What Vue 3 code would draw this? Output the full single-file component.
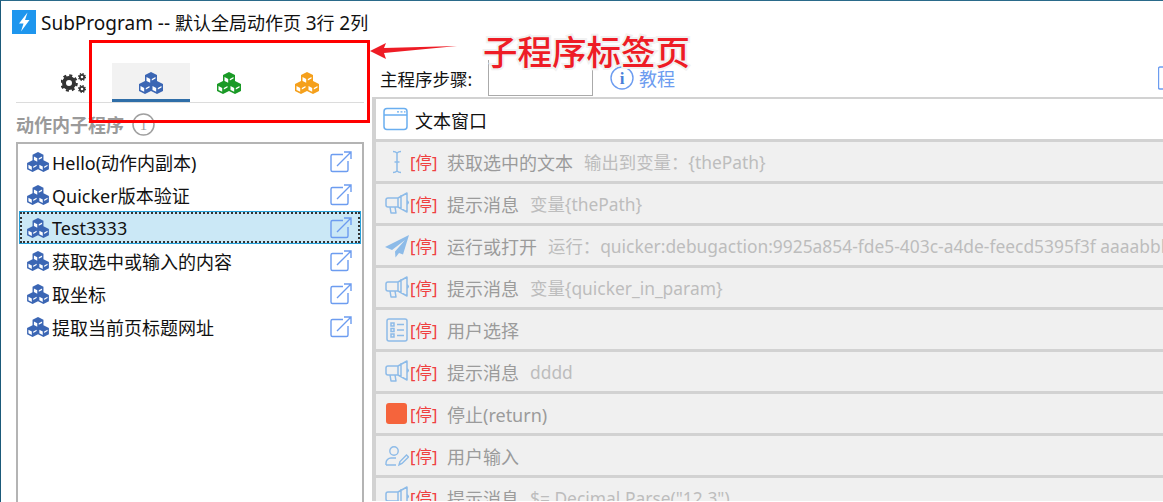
<script setup>
const cubes = [
  { x: 6, y: 0 },
  { x: 0, y: 9 },
  { x: 12, y: 9 }
]
const subs = [
  { name: 'Hello(动作内副本)' },
  { name: 'Quicker版本验证' },
  { name: 'Test3333', selected: true },
  { name: '获取选中或输入的内容' },
  { name: '取坐标' },
  { name: '提取当前页标题网址' }
]
const tabs = [
  { color: '#3b66b4', active: true },
  { color: '#1a9a26' },
  { color: '#f5a01c' }
]
const steps = [
  { icon: 'cursor', name: '获取选中的文本', detail: '输出到变量：{thePath}' },
  { icon: 'horn', name: '提示消息', detail: '变量{thePath}' },
  { icon: 'plane', name: '运行或打开', detail: '运行：quicker:debugaction:9925a854-fde5-403c-a4de-feecd5395f3f aaaabbb' },
  { icon: 'horn', name: '提示消息', detail: '变量{quicker_in_param}' },
  { icon: 'list', name: '用户选择', detail: '' },
  { icon: 'horn', name: '提示消息', detail: 'dddd' },
  { icon: 'stop', name: '停止(return)', detail: '' },
  { icon: 'user', name: '用户输入', detail: '' },
  { icon: 'horn', name: '提示消息', detail: '$= Decimal.Parse("12.3")' }
]
</script>

<template>
  <div class="win">
    <header class="title">
      <svg class="logo" viewBox="0 0 24 24"><rect width="24" height="24" fill="#1e96ee"/><path d="M15.5 2.500 7 13.500h4.500L9 21.500l8.500-11.500H13z" fill="#fff"/></svg>
      <span><span class="lat">SubProgram -- </span>默认全局动作页 <span class="lat">3</span>行 <span class="lat">2</span>列</span>
    </header>
    <div class="body">
      <aside class="left">
        <nav class="tabs">
          <div class="tab gear">
            <svg width="25" height="22" viewBox="0 0 25 22">
              <circle cx="8" cy="11" r="5" fill="none" stroke="#333" stroke-width="4"/>
              <circle cx="8" cy="11" r="7.600" fill="none" stroke="#333" stroke-width="2.400" stroke-dasharray="3 2.970"/>
              <circle cx="21" cy="5" r="2.200" fill="none" stroke="#333" stroke-width="1.800"/>
              <circle cx="21" cy="5" r="3.400" fill="none" stroke="#333" stroke-width="1.200" stroke-dasharray="1.400 1.270"/>
              <circle cx="21" cy="17" r="2.200" fill="none" stroke="#333" stroke-width="1.800"/>
              <circle cx="21" cy="17" r="3.400" fill="none" stroke="#333" stroke-width="1.200" stroke-dasharray="1.400 1.270"/>
            </svg>
          </div>
          <div v-for="(t, i) in tabs" :key="i" class="tab" :class="{ active: t.active }">
            <svg width="24" height="22" viewBox="0 0 24 22">
              <g v-for="(c, j) in cubes" :key="j" :transform="`translate(${c.x} ${c.y})`">
                <path d="M6 0 12 3V10L6 13 0 10V3Z" :fill="t.color"/>
                <path d="M1.500 5 5.200 7V10.800L1.500 8.900Z" fill="#fff"/>
                <path d="M10.500 5 6.800 7V8.500L10.500 6.500Z" fill="#fff"/>
              </g>
            </svg>
          </div>
        </nav>
        <h3 class="heading">动作内子程序
          <svg width="23" height="23" viewBox="0 0 23 23"><circle cx="11.500" cy="11.500" r="10.500" fill="none" stroke="#a0a0a0" stroke-width="1.500"/><text x="11.500" y="17" text-anchor="middle" class="one">1</text></svg>
        </h3>
        <ul class="list">
          <li v-for="s in subs" :key="s.name" :class="{ sel: s.selected }">
            <svg width="22" height="20" viewBox="0 0 24 22">
              <g v-for="(c, j) in cubes" :key="j" :transform="`translate(${c.x} ${c.y})`">
                <path d="M6 0 12 3V10L6 13 0 10V3Z" fill="#3b66b4"/>
                <path d="M1.500 5 5.200 7V10.800L1.500 8.900Z" fill="#fff"/>
                <path d="M10.500 5 6.800 7V8.500L10.500 6.500Z" fill="#fff"/>
              </g>
            </svg>
            <span class="nm">{{ s.name }}</span>
            <svg class="ext" width="22" height="22" viewBox="0 0 22 22" fill="none" stroke="#6c9cf0" stroke-width="1.400">
              <path d="M13 3.500H2.500A1.500 1.500 0 0 0 1 5v14a1.500 1.500 0 0 0 1.500 1.500h14A1.500 1.500 0 0 0 18 19V10"/>
              <path d="M7 15 20.500 1.500M14 1h7v7"/>
            </svg>
          </li>
        </ul>
      </aside>
      <main class="right">
        <div class="toolbar">
          <span class="tl">主程序步骤:</span>
          <div class="inp"></div>
          <svg class="info" width="24" height="24" viewBox="0 0 24 24"><circle cx="12" cy="12" r="11" fill="none" stroke="#6c9cf0" stroke-width="1.400"/><text x="12" y="18" text-anchor="middle" class="i">i</text></svg>
          <span class="link">教程</span>
          <svg class="corner" width="14" height="24" viewBox="0 0 14 24" fill="none" stroke="#6c9cf0" stroke-width="1.400"><path d="M14 1H2A1.500 1.500 0 0 0 .5 2.500v19A1.500 1.500 0 0 0 2 23h12"/></svg>
        </div>
        <div class="steps">
          <div class="step first">
            <svg width="26" height="24" viewBox="0 0 26 24" fill="none" stroke="#6aaef0" stroke-width="1.500">
              <rect x="1" y="1.500" width="23" height="21" rx="3"/><path d="M1 8h23"/><path d="M14 4.800h2M17.500 4.800h2M21 4.800h1.500" stroke-width="1.300"/>
            </svg>
            <span class="fname">文本窗口</span>
          </div>
          <div v-for="(s, i) in steps" :key="i" class="step">
            <span class="ic">
              <svg v-if="s.icon === 'cursor'" width="24" height="24" viewBox="0 0 24 24" fill="none" stroke="#8dbbe8" stroke-width="1.500"><path d="M8 1.500c2 0 3 .5 4 1.500 1-1 2-1.500 4-1.500M8 22.500c2 0 3-.5 4-1.500 1 1 2 1.500 4 1.500M12 3v18M9.500 12h5"/></svg>
              <svg v-else-if="s.icon === 'horn'" width="24" height="24" viewBox="0 0 24 24" fill="none" stroke="#8dbbe8" stroke-width="1.500"><path d="M13 6H3a2 2 0 0 0-2 2v5a2 2 0 0 0 2 2h10M13 6 22 1v19l-9-5zM22 8.500l1.500 2-1.500 2M5 15l1 6h5l-1-6M16 3v14" stroke-linejoin="round"/></svg>
              <svg v-else-if="s.icon === 'plane'" width="24" height="24" viewBox="0 0 24 24" fill="#8dbbe8"><path d="M24 1 0 13l7 3L20 6 10 17.500l.5 6 3.500-4.500 4 1.500z"/></svg>
              <svg v-else-if="s.icon === 'list'" width="22" height="24" viewBox="0 0 22 24" fill="none" stroke="#8dbbe8" stroke-width="1.500"><rect x="1" y="1" width="20" height="22" rx="2"/><rect x="5" y="5" width="3" height="3"/><rect x="5" y="10.500" width="3" height="3"/><rect x="5" y="16" width="3" height="3"/><path d="M11 6.500h7M11 12h7M11 17.500h7"/></svg>
              <span v-else-if="s.icon === 'stop'" class="stop"></span>
              <svg v-else width="24" height="24" viewBox="0 0 24 24" fill="none" stroke="#8dbbe8" stroke-width="1.400"><circle cx="9" cy="7" r="4.200"/><path d="M1 21v-2a5 5 0 0 1 5-5h5M1 21h10"/><path d="M14 21l1-3.500 6.500-6.500 2 2-6.500 6.500z"/></svg>
            </span>
            <span class="stopd">[停]</span>
            <span class="nm2">{{ s.name }}</span>
            <span v-if="s.detail" class="det">{{ s.detail }}</span>
          </div>
        </div>
      </main>
    </div>
    <div class="callout-box"></div>
    <svg class="arrow" width="90" height="20" viewBox="0 0 90 20"><path d="M0 10 16 2 14 7 87 5 14 12 16 18z" fill="#ee1c25"/></svg>
    <div class="callout">子程序标签页</div>
  </div>
</template>

<style>
html, body { margin: 0; background: #fff; overflow: hidden; }
</style>

<style scoped>
.win {
  position: relative;
  width: 1163px;
  height: 502px;
  box-sizing: border-box;
  overflow: hidden;
  background: #fff;
  border-top: 1px solid #2a6a8a;
  border-left: 1px solid #1b5a7a;
  font-family: "Noto Sans", "Noto Sans CJK SC", sans-serif;
  color: #111;
}
.title {
  display: flex;
  align-items: center;
  height: 24px;
  margin: 9px 0 0 11px;
  gap: 5px;
  font-size: 18px;
  white-space: nowrap;
}
.lat { font-size: 19px; }
.logo { width: 24px; height: 24px; flex: none; }
.body { display: flex; }
.left { width: 348px; margin-left: 15px; flex: none; }
.tabs {
  display: flex;
  height: 39px;
  margin-top: 29px;
  border-bottom: 1px solid #dcdcdc;
  padding-left: 18px;
}
.tab {
  width: 78px;
  display: flex;
  align-items: center;
  justify-content: center;
  box-sizing: border-box;
}
.tab.active { background: #f2f2f2; border-bottom: 3px solid #2f6ea8; padding-top: 3px; }
.heading {
  display: flex;
  align-items: center;
  gap: 8px;
  margin: 10px 0 0;
  height: 22px;
  font-size: 18px;
  font-weight: 700;
  color: #9a9a9a;
}
.one { font: 400 15px "Liberation Serif", serif; fill: #a0a0a0; }
.list {
  list-style: none;
  margin: 7px 0 0;
  padding: 1px;
  border: 2px solid #b4b4b4;
  height: 400px;
  box-sizing: border-box;
  width: 348px;
}
.list li {
  display: flex;
  align-items: center;
  height: 33px;
  padding: 0 9px 0 8px;
  gap: 3px;
  font-size: 18px;
  box-sizing: border-box;
  white-space: nowrap;
}
.list li.sel {
  background: #cbe8f6;
  border: 1px solid #26a0da;
  outline: 2px dotted #333;
  outline-offset: -3px;
  padding: 0 8px 0 7px;
}
.nm { flex: 1; }
.ext { flex: none; }
.right { flex: 1; min-width: 0; margin-left: 8px; }
.toolbar {
  display: flex;
  align-items: center;
  position: relative;
  height: 36px;
  margin-top: 26px;
  padding-left: 8px;
  white-space: nowrap;
}
.tl { font-size: 17.500px; width: 108px; flex: none; }
.inp { width: 105px; height: 36px; box-sizing: border-box; border: 1px solid #aaa; border-top: 0; flex: none; }
.info { margin-left: 17px; flex: none; }
.i { font: 700 17px "Liberation Serif", serif; fill: #4a7fd8; }
.link { margin-left: 5px; font-size: 18px; color: #6c9cf0; }
.corner { position: absolute; right: -9px; top: 6px; }
.steps {
  margin-top: 1px;
  background: #d2d2d2;
  padding: 2px 0 0 4px;
  display: flex;
  flex-direction: column;
  gap: 3px;
  height: 404px;
  overflow: hidden;
  box-sizing: border-box;
}
.step {
  display: flex;
  align-items: center;
  flex: none;
  height: 39px;
  background: #f0f0f0;
  padding-left: 7px;
  white-space: nowrap;
  font-size: 18px;
}
.step.first { background: #fff; height: 40px; gap: 5px; }
.fname { color: #111; font-size: 18px; padding-top: 2px; margin-left: 1px; }
.ic {
  width: 27px;
  height: 24px;
  display: flex;
  align-items: center;
  justify-content: center;
  flex: none;
}
.stop { width: 21px; height: 21px; border-radius: 3px; background: #f5643c; }
.stopd { color: #ef4040; font-size: 16.500px; width: 37px; flex: none; }
.nm2 { color: #9b9b9b; margin-right: 11px; }
.det { color: #bdbdbd; font-size: 17.400px; }
.callout-box {
  position: absolute;
  left: 88px;
  top: 39px;
  width: 281px;
  height: 83px;
  box-sizing: border-box;
  border: 3px solid #f00;
}
.arrow { position: absolute; left: 369px; top: 40px; }
.callout {
  position: absolute;
  left: 482px;
  top: 29px;
  font-size: 34.500px;
  font-weight: 500;
  line-height: 44px;
  color: #ee1c25;
  -webkit-text-stroke: 4px #f1f1f1;
  paint-order: stroke fill;
  white-space: nowrap;
}
</style>
